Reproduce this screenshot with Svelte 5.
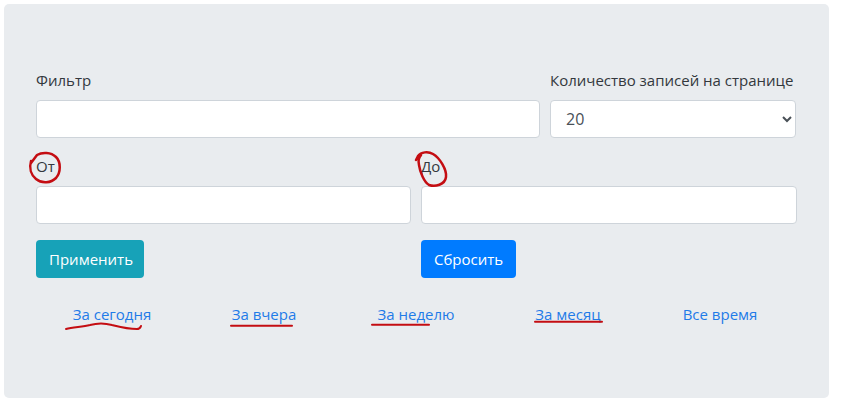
<script>
  const periods = ['За сегодня', 'За вчера', 'За неделю', 'За месяц', 'Все время'];
</script>

<div class="page">
  <div class="panel">
    <div class="row-top">
      <div class="field">
        <span class="label">Фильтр</span>
        <input class="control" type="text" aria-label="Фильтр" />
      </div>
      <div class="field">
        <span class="label">Количество записей на странице</span>
        <select class="control select" aria-label="Количество записей на странице">
          <option>20</option>
        </select>
      </div>
    </div>
    <div class="row-dates">
      <div class="field">
        <span class="label">От</span>
        <input class="control" type="text" aria-label="От" />
      </div>
      <div class="field">
        <span class="label">До</span>
        <input class="control" type="text" aria-label="До" />
      </div>
    </div>
    <div class="row-dates actions">
      <div><button class="btn teal">Применить</button></div>
      <div><button class="btn blue">Сбросить</button></div>
    </div>
    <nav class="periods">
      {#each periods as p}
        <span class="cell"><a href="#top">{p}</a></span>
      {/each}
    </nav>
  </div>

  <svg class="marks" width="852" height="403" viewBox="0 0 852 403" fill="none" stroke="#c40d12" stroke-width="2" stroke-linecap="round" stroke-linejoin="round" aria-hidden="true">
    <g stroke-width="2.5">
      <path d="M31 163 L37 155 C42 152 51 152 56 157 C61 162 61 172 56 178 C51 183 42 184 36 179 C31 175 29 168 31 161" />
      <path d="M416 160 L418 156 C421 152 428 151 433 154 C440 158 447 170 446 177 C445 185 435 187 429 185 C424 182 420 172 419 165 C418 160 419 157 421 155" />
    </g>
    <path d="M66 329 C73 327 82 327 90 325 C97 323 105 323 112 325 C120 327 127 329 137 329 C140 329 140 328 141 326" />
    <path d="M231 325.700 H292" />
    <path d="M372 324.700 H429" />
    <path d="M535 321.800 H602" />
  </svg>
</div>

<style>
  :global(body) {
    margin: 0;
    background: #fff;
  }

  .page {
    position: relative;
    width: 852px;
    height: 403px;
    padding: 4px 0 0 4px;
    box-sizing: border-box;
    font-family: "Open Sans", "Noto Sans", sans-serif;
    font-size: 15px;
    line-height: 24px;
    color: #33383d;
  }

  .panel {
    width: 825px;
    height: 394px;
    box-sizing: border-box;
    padding: 64px 32px 0;
    background: #e9ecef;
    border-radius: 5px;
  }

  .row-top {
    display: grid;
    grid-template-columns: 504px 246px;
    gap: 10px;
  }

  .row-dates {
    display: grid;
    grid-template-columns: 375px 376px;
    gap: 10px;
    margin-top: 16px;
  }

  .field {
    display: flex;
    flex-direction: column;
    gap: 8px;
  }

  .label {
    height: 24px;
    white-space: nowrap;
  }

  .control {
    display: block;
    width: 100%;
    height: 38px;
    box-sizing: border-box;
    padding: 6px 12px;
    border: 1px solid #ced4da;
    border-radius: 4px;
    background: #fff;
    font: inherit;
    font-size: 16px;
    color: #495057;
    outline: none;
  }

  .select {
    padding-left: 11px;
  }

  .btn {
    height: 38px;
    padding: 0 12px;
    border: 1px solid transparent;
    border-radius: 4px;
    font: inherit;
    color: #fff;
  }

  .teal {
    width: 108px;
    background: #17a2b8;
  }

  .blue {
    width: 95px;
    background: #007bff;
  }

  .periods {
    display: grid;
    grid-template-columns: repeat(5, 152px);
    margin-top: 24px;
  }

  .cell {
    text-align: center;
  }

  a {
    color: #1f7be8;
    text-decoration: none;
  }

  .marks {
    position: absolute;
    top: 0;
    left: 0;
    pointer-events: none;
  }
</style>
